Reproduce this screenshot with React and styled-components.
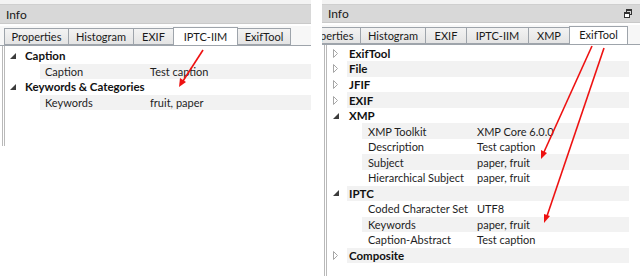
import React from "react";
import styled, { createGlobalStyle } from "styled-components";

const Global = createGlobalStyle`
  html, body { margin: 0; padding: 0; background: #ffffff; }
  body { font-family: Lato, "Noto Sans", "Liberation Sans", sans-serif; font-size: 11px; color: #1e1e1e; }
`;

const Page = styled.div`
  position: relative;
  width: 640px;
  height: 276px;
  display: flex;
  gap: ${(p) => p.$gap}px;
  overflow: hidden;
  background: #ffffff;
`;

const Panel = styled.div`
  width: ${(p) => p.$width}px;
  flex: none;
  display: flex;
  flex-direction: column;
  padding-top: 4px;
  background: linear-gradient(#f3f3f3 0 4px, #ffffff 4px);
`;

const Header = styled.div`
  height: 18px;
  display: flex;
  align-items: center;
  justify-content: space-between;
  padding: 0 8px 0 6px;
  background: #d8d8d8;
  border-top: 1px solid #cfcfcf;
  border-bottom: 1px solid #c9c9c9;
  color: #1a1a1a;
  font-size: 12px;
`;

const TabBar = styled.div`
  margin-top: 2px;
  height: 19px;
  display: flex;
  align-items: flex-end;
  padding-left: ${(p) => p.$pad}px;
  border-bottom: 1px solid #9ea4ab;
  overflow: hidden;
  background: #f7f7f7;
`;

const TabTrack = styled.div`
  display: flex;
  align-items: flex-end;
  margin-left: ${(p) => p.$shift}px;
`;

const Tab = styled.div`
  flex: none;
  width: ${(p) => p.$w}px;
  height: ${(p) => (p.$active ? 19 : 17)}px;
  margin-bottom: ${(p) => (p.$active ? -1 : 0)}px;
  box-sizing: border-box;
  display: flex;
  align-items: center;
  justify-content: center;
  border: 1px solid #9ea4ab;
  border-bottom: ${(p) => (p.$active ? "none" : "1px solid #9ea4ab")};
  margin-left: -1px;
  background: ${(p) =>
    p.$active ? "#ffffff" : "linear-gradient(#f3f3f3, #e4e4e4)"};
  color: #1a1a1a;
  position: ${(p) => (p.$active ? "relative" : "static")};
  z-index: ${(p) => (p.$active ? 1 : 0)};
  padding-bottom: ${(p) => (p.$active ? 2 : 0)}px;
`;

const Tree = styled.div`
  height: ${(p) => p.$h}px;
  margin-left: 2px;
  padding-top: ${(p) => p.$top}px;
  padding-right: ${(p) => p.$right}px;
  border-left: 3px double #b9b9b9;
  background: #ffffff;
  box-sizing: border-box;
`;

const Row = styled.div`
  height: 15.55px;
  display: flex;
  align-items: stretch;
`;

const Expander = styled.div`
  width: ${(p) => p.$w}px;
  flex: none;
  display: flex;
  align-items: center;
  justify-content: center;
  padding-right: ${(p) => p.$pr}px;
  box-sizing: border-box;
`;

const Cell = styled.div`
  flex: 1;
  display: flex;
  align-items: center;
  padding-left: ${(p) => p.$pl}px;
  background: ${(p) => (p.$striped ? "#f2f2f2" : "transparent")};
  white-space: nowrap;
`;

const GroupLabel = styled.span`
  font-weight: 700;
  font-size: 11.5px;
  color: #111;
`;

const Key = styled.span`
  width: ${(p) => p.$w}px;
  flex: none;
  color: #1e1e1e;
`;

const Value = styled.span`
  color: #1e1e1e;
`;

const FloatIcon = () => (
  <svg width="8" height="9" viewBox="0 0 8 9">
    <rect x="2.5" y="0.5" width="5" height="5" fill="none" stroke="#333" />
    <rect x="0.5" y="3.5" width="5" height="5" fill="#fff" stroke="#333" />
    <line x1="0.5" y1="4.5" x2="5.5" y2="4.5" stroke="#333" />
    <line x1="2.5" y1="1.5" x2="7.5" y2="1.5" stroke="#333" />
  </svg>
);

const Expanded = () => (
  <svg width="6" height="6" viewBox="0 0 6 6">
    <polygon points="6,0 6,6 0,6" fill="#3c3c3c" />
  </svg>
);

const Collapsed = () => (
  <svg width="5" height="9" viewBox="0 0 5 9">
    <polygon points="0.5,0.5 4.5,4.5 0.5,8.5" fill="#fff" stroke="#a6a6a6" />
  </svg>
);

const Arrows = styled.svg`
  position: absolute;
  left: 0;
  top: 0;
  pointer-events: none;
`;

function TreeView({ rows, cfg }) {
  return (
    <Tree $h={cfg.h} $top={cfg.top} $right={cfg.right}>
      {rows.map((r, i) =>
        r.group ? (
          <Row key={i}>
            <Expander $w={cfg.groupIndent} $pr={cfg.expPad}>
              {r.open ? <Expanded /> : <Collapsed />}
            </Expander>
            <Cell $pl={2} $striped={i % 2 === 1}>
              <GroupLabel>{r.group}</GroupLabel>
            </Cell>
          </Row>
        ) : (
          <Row key={i}>
            <Expander $w={cfg.childIndent} />
            <Cell $pl={cfg.keyPad} $striped={i % 2 === 1}>
              <Key $w={cfg.keyW}>{r.k}</Key>
              <Value>{r.v}</Value>
            </Cell>
          </Row>
        )
      )}
    </Tree>
  );
}

const leftRows = [
  { group: "Caption", open: true },
  { k: "Caption", v: "Test caption" },
  { group: "Keywords & Categories", open: true },
  { k: "Keywords", v: "fruit, paper" },
];

const rightRows = [
  { group: "ExifTool" },
  { group: "File" },
  { group: "JFIF" },
  { group: "EXIF" },
  { group: "XMP", open: true },
  { k: "XMP Toolkit", v: "XMP Core 6.0.0" },
  { k: "Description", v: "Test caption" },
  { k: "Subject", v: "paper, fruit" },
  { k: "Hierarchical Subject", v: "paper, fruit" },
  { group: "IPTC", open: true },
  { k: "Coded Character Set", v: "UTF8" },
  { k: "Keywords", v: "paper, fruit" },
  { k: "Caption-Abstract", v: "Test caption" },
  { group: "Composite" },
];

const leftTabs = [
  ["Properties", 65],
  ["Histogram", 66],
  ["EXIF", 41],
  ["IPTC-IIM", 65, true],
  ["ExifTool", 54],
];

const rightTabs = [
  ["Properties", 65],
  ["Histogram", 66],
  ["EXIF", 42],
  ["IPTC-IIM", 63],
  ["XMP", 42],
  ["ExifTool", 59, true],
];

export default function App() {
  return (
    <>
      <Global />
      <Page $gap={11}>
        <Panel $width={311}>
          <Header>
            <span>Info</span>
          </Header>
          <TabBar $pad={5}>
            <TabTrack $shift={0}>
              {leftTabs.map(([t, w, a]) => (
                <Tab key={t} $w={w} $active={a}>
                  {t}
                </Tab>
              ))}
            </TabTrack>
          </TabBar>
          <TreeView
            rows={leftRows}
            cfg={{
              h: 100,
              top: 2,
              right: 0,
              groupIndent: 18,
              expPad: 2,
              childIndent: 35,
              keyPad: 5,
              keyW: 105,
            }}
          />
        </Panel>
        <Panel $width={318}>
          <Header>
            <span>Info</span>
            <FloatIcon />
          </Header>
          <TabBar $pad={4}>
            <TabTrack $shift={-29}>
              {rightTabs.map(([t, w, a]) => (
                <Tab key={t} $w={w} $active={a}>
                  {t}
                </Tab>
              ))}
            </TabTrack>
          </TabBar>
          <TreeView
            rows={rightRows}
            cfg={{
              h: 240,
              top: 1,
              right: 11,
              groupIndent: 20,
              expPad: 3,
              childIndent: 35,
              keyPad: 6,
              keyW: 109,
            }}
          />
        </Panel>
        <Arrows width="640" height="276" viewBox="0 0 640 276">
          <g stroke="#ee1111" strokeWidth="1.6" fill="#ee1111">
            <line x1="203" y1="50" x2="183" y2="81" />
            <polygon points="179,87 180,78 186,82" stroke="none" />
            <line x1="592" y1="46" x2="544" y2="152" />
            <polygon points="541,159 541,150 547,153" stroke="none" />
            <line x1="604" y1="48" x2="547" y2="216" />
            <polygon points="544,223 544,214 550,216" stroke="none" />
          </g>
        </Arrows>
      </Page>
    </>
  );
}
